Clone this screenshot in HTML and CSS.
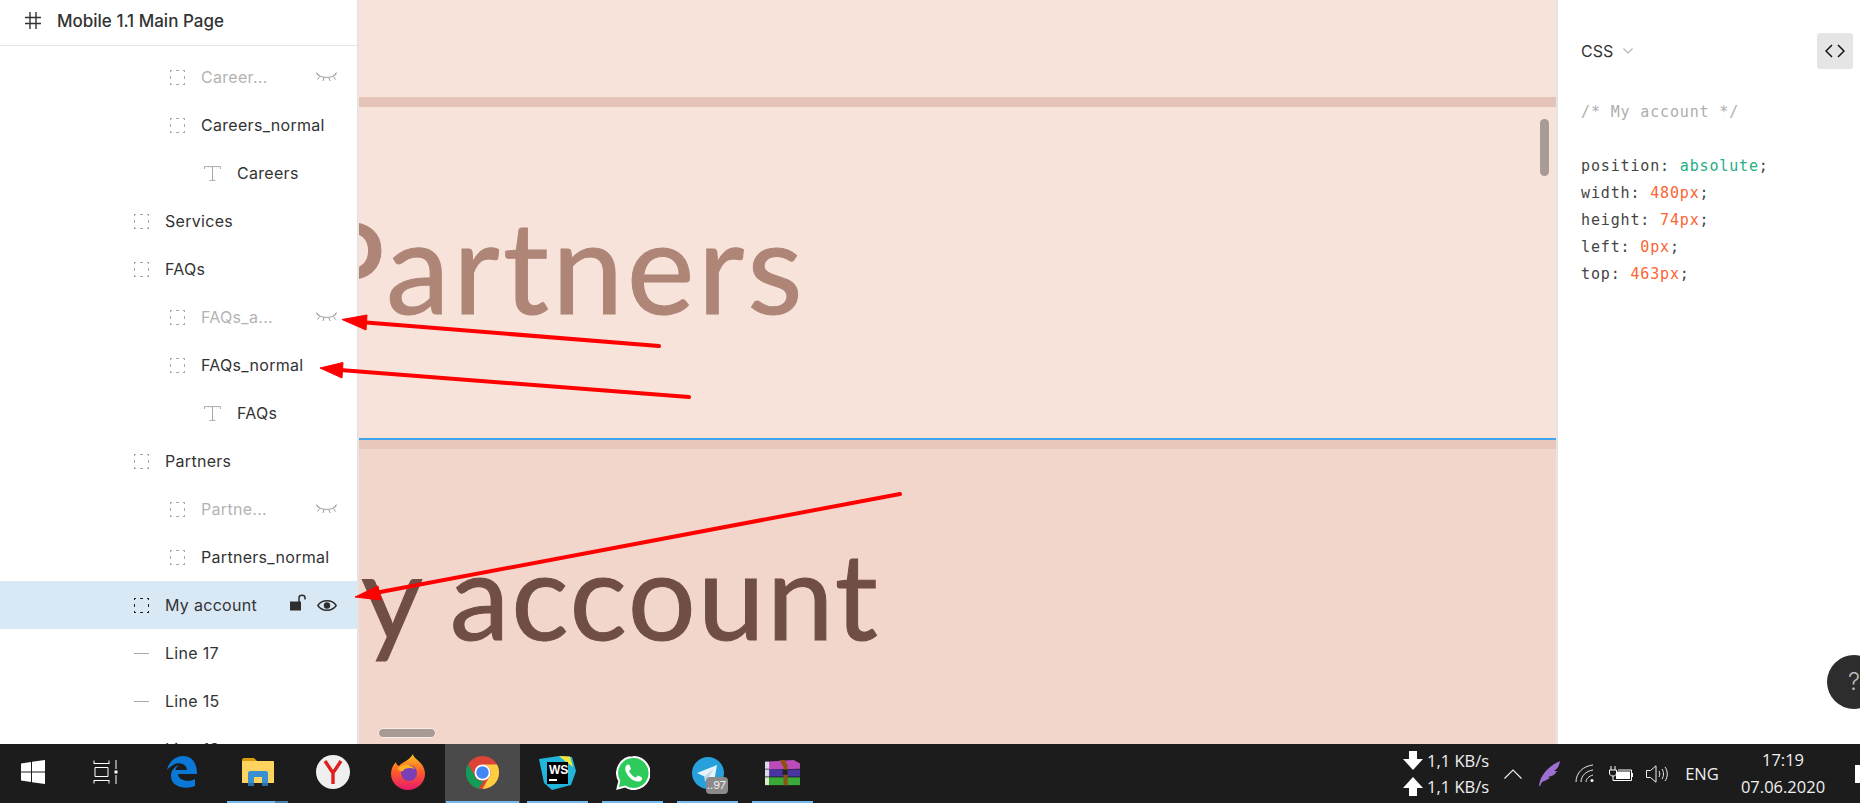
FILE: index.html
```html
<!DOCTYPE html>
<html lang="en">
<head>
    <meta charset="UTF-8">
    <meta name="viewport" content="width=device-width, initial-scale=1.0">
    <title>Mobile 1.1 Main Page</title>
    <link rel="stylesheet" href="styles.css">
</head>
<body>
    <svg class="defs" width="0" height="0">
        <symbol id="i-frame" viewBox="0 0 15 15">
            <path d="M0 0.500H2M6 0.500H9M13 0.500H15M0 14.500H2M6 14.500H9M13 14.500H15M0.500 0V2M0.500 6V9M0.500 13V15M14.500 0V2M14.500 6V9M14.500 13V15" fill="none" stroke="currentColor"/>
        </symbol>
        <symbol id="i-text" viewBox="0 0 17 15">
            <path d="M0.500 3V0.600H16.500V3M8.500 0.600V14.400M5.500 14.400H11.500" fill="none" stroke="currentColor"/>
        </symbol>
        <symbol id="i-line" viewBox="0 0 15 15">
            <path d="M0 7.500H15" stroke="currentColor"/>
        </symbol>
        <symbol id="i-hidden" viewBox="0 0 21 10">
            <path d="M0.500 2C6 6.600 15 6.600 20.500 2M0.500 0.500L3 3.500M20.500 0.500L18 3.500M3.500 4.500L1.500 7.500M8 6L7 9M13 6L14 9M17.500 4.500L19.500 7.500" fill="none" stroke="currentColor"/>
        </symbol>
    </svg>

    <div class="screen">
        <div class="workspace">
            <aside class="layers">
                <div class="layers-head">
                    <svg class="hash" width="16" height="17" viewBox="0 0 16 17"><path d="M5 0V17M11 0V17M0 5.500H16M0 11.500H16" fill="none" stroke="#333" stroke-width="1.400"/></svg>
                    <span>Mobile 1.1 Main Page</span>
                </div>
                <ul class="layer-list">
                    <li class="layer depth-2 muted"><svg class="ico"><use href="#i-frame"/></svg><span class="name">Career...</span><svg class="eye-off"><use href="#i-hidden"/></svg></li>
                    <li class="layer depth-2"><svg class="ico"><use href="#i-frame"/></svg><span class="name">Careers_normal</span></li>
                    <li class="layer depth-3"><svg class="ico ico-t"><use href="#i-text"/></svg><span class="name">Careers</span></li>
                    <li class="layer depth-1"><svg class="ico"><use href="#i-frame"/></svg><span class="name">Services</span></li>
                    <li class="layer depth-1"><svg class="ico"><use href="#i-frame"/></svg><span class="name">FAQs</span></li>
                    <li class="layer depth-2 muted"><svg class="ico"><use href="#i-frame"/></svg><span class="name">FAQs_a...</span><svg class="eye-off"><use href="#i-hidden"/></svg></li>
                    <li class="layer depth-2"><svg class="ico"><use href="#i-frame"/></svg><span class="name">FAQs_normal</span></li>
                    <li class="layer depth-3"><svg class="ico ico-t"><use href="#i-text"/></svg><span class="name">FAQs</span></li>
                    <li class="layer depth-1"><svg class="ico"><use href="#i-frame"/></svg><span class="name">Partners</span></li>
                    <li class="layer depth-2 muted"><svg class="ico"><use href="#i-frame"/></svg><span class="name">Partne...</span><svg class="eye-off"><use href="#i-hidden"/></svg></li>
                    <li class="layer depth-2"><svg class="ico"><use href="#i-frame"/></svg><span class="name">Partners_normal</span></li>
                    <li class="layer depth-1 selected">
                        <svg class="ico ico-dark"><use href="#i-frame"/></svg>
                        <span class="name">My account</span>
                        <svg class="lock" width="16" height="17" viewBox="0 0 16 17"><path d="M0 7.500H11V16.500H0Z" fill="#2e2e2e"/><path d="M9 8V3.800C9 0.400 15 0.400 15 3.800V5.500" fill="none" stroke="#2e2e2e" stroke-width="1.500"/></svg>
                        <svg class="eye" width="20" height="13" viewBox="0 0 20 13"><path d="M0.800 6.500C5 0.200 15 0.200 19.200 6.500C15 12.800 5 12.800 0.800 6.500Z" fill="none" stroke="#2e2e2e" stroke-width="1.400"/><circle cx="10" cy="6.500" r="3.200" fill="#2e2e2e"/></svg>
                    </li>
                    <li class="layer depth-1"><svg class="ico"><use href="#i-line"/></svg><span class="name">Line 17</span></li>
                    <li class="layer depth-1"><svg class="ico"><use href="#i-line"/></svg><span class="name">Line 15</span></li>
                    <li class="layer depth-1"><svg class="ico"><use href="#i-line"/></svg><span class="name">Line 13</span></li>
                </ul>
            </aside>

            <main class="canvas">
                <div class="art art-light">
                    <div class="art-rule"></div>
                    <div class="art-label label-partners">Partners</div>
                </div>
                <div class="art art-dark">
                    <div class="art-rule"></div>
                    <div class="art-label label-account">My account</div>
                </div>
                <div class="scroll-v"></div>
                <div class="scroll-h"></div>
            </main>

            <aside class="inspect">
                <div class="inspect-head">
                    <span class="lang">CSS</span>
                    <svg class="lang-arrow" width="10" height="6" viewBox="0 0 10 6"><path d="M0.500 0.500L5 5L9.500 0.500" fill="none" stroke="#b5b5b5" stroke-width="1.200"/></svg>
                    <button class="code-btn"><svg width="20" height="14" viewBox="0 0 20 14"><path d="M7 1L1 7L7 13M13 1L19 7L13 13" fill="none" stroke="#111" stroke-width="1.500"/></svg></button>
                </div>
                <pre class="code"><span class="c-comment">/* My account */</span>

position: <span class="c-word">absolute</span>;
width: <span class="c-num">480px</span>;
height: <span class="c-num">74px</span>;
left: <span class="c-num">0px</span>;
top: <span class="c-num">463px</span>;</pre>
                <div class="help">?</div>
            </aside>
        </div>

        <footer class="taskbar">
            <div class="task-btn task-start">
                <svg width="24" height="24" viewBox="0 0 24 24"><path d="M0 3.400L10 2V11.400H0ZM11 1.800L24 0V11.400H11ZM0 12.600H10V22L0 20.600ZM11 12.600H24V24L11 22.200Z" fill="#fff"/></svg>
            </div>
            <div class="task-btn task-view">
                <svg width="25" height="24" viewBox="0 0 25 24"><path d="M1 4V0.500M16 4V0.500M1 3.500H16M2 7.500H15V16.500H2ZM1 23.500V20M16 23.500V20M1 20.500H16M23 0V9M23 15V24" fill="none" stroke="#fff"/><rect x="21.500" y="10.500" width="3" height="3" fill="#fff"/></svg>
            </div>
            <div class="task-btn task-edge">
                <svg width="30" height="32" viewBox="0 0 30 32"><path d="M0 14C2 5 9 0 16 0C25 0 30 7 30 18H11C11 24 21 27 28 23V30C18 34 4 31 4 20C4 15 7 11 12 9C9 11 8.500 13 8.500 14H20C20 8 11 5 6 9C3.500 10.500 1.500 12 0 14Z" fill="#0b78d7"/></svg>
            </div>
            <div class="task-btn open split">
                <svg width="32" height="30" viewBox="0 0 32 30"><path d="M0 2C0 1 1 0 2 0H12L15 3H0Z" fill="#d89e0c"/><path d="M0 3H31C31.500 3 32 3.500 32 4V25H0Z" fill="#ffd45e"/><path d="M6 25V15C6 14 7 13 8 13H24C25 13 26 14 26 15V25H20V19H12V25Z" fill="#3a8fd3"/><path d="M6 25H12V28H6ZM20 25H26V28H20Z" fill="#2b70a8"/></svg>
            </div>
            <div class="task-btn">
                <svg width="34" height="34" viewBox="0 0 34 34"><circle cx="17" cy="17" r="17" fill="#efefef"/><path d="M9 6L17 18L25 6M17 18V29" fill="none" stroke="#e01e1e" stroke-width="3.400"/></svg>
            </div>
            <div class="task-btn">
                <svg width="34" height="36" viewBox="0 0 34 36"><defs><linearGradient id="ff" x1="0" y1="0" x2="0" y2="1"><stop offset="0" stop-color="#ffc51e"/><stop offset="0.500" stop-color="#ff5b2b"/><stop offset="1" stop-color="#e6186c"/></linearGradient></defs><path d="M22 0C22 5 34 8 34 20C34 29 26 36 17 36C8 36 0 29 0 20C0 15 2 11 5 8C5 10 6 11 8 12C11 8 18 7 22 0Z" fill="url(#ff)"/><circle cx="18" cy="19" r="8" fill="#7b3fb5"/><path d="M7 14C11 10 19 9 24 15C19 13 13 14 12 17C9 18 7 16 7 14Z" fill="#ffb020"/></svg>
            </div>
            <div class="task-btn open active">
                <svg width="33" height="33" viewBox="0 0 33 33"><circle cx="16.500" cy="16.500" r="16.500" fill="#db4437"/><path d="M16.500 33A16.500 16.500 0 0 1 2.200 8.250L9 20.500A8 8 0 0 0 18 24.500L12 33Z" fill="#0f9d58"/><path d="M16.500 8.500H31A16.500 16.500 0 0 1 16.500 33L23.500 20.500A8 8 0 0 0 16.500 8.500Z" fill="#ffcd40"/><circle cx="16.500" cy="16.500" r="8" fill="#fff"/><circle cx="16.500" cy="16.500" r="6.200" fill="#4285f4"/></svg>
            </div>
            <div class="task-btn open">
                <svg width="37" height="34" viewBox="0 0 37 34"><path d="M0 3L20 0L33 1L37 15L32 29L13 34L5 27Z" fill="#22b5dc"/><path d="M20 0L31 0.500L34 11L26 5Z" fill="#f4e83a"/><rect x="8" y="6" width="21" height="22" fill="#000"/><text class="ws-text" x="10" y="18">WS</text><rect x="10" y="23" width="8" height="2" fill="#fff"/></svg>
            </div>
            <div class="task-btn open">
                <svg width="34" height="34" viewBox="0 0 34 34"><path d="M17 1A16 16 0 0 0 3.300 25L1.500 32.500L9 30.500A16 16 0 1 0 17 1Z" fill="#2ccb5b" stroke="#fff" stroke-width="2"/><path d="M11.500 8.500C9 10 8.500 13 10.500 17C13 22 18 26 23 25.500C25.500 25 26.500 23 26 21.500L22 19.500L20 21.500C17.500 21 14 17.500 13 15L15 13L13.500 9C13 8.500 12 8.300 11.500 8.500Z" fill="#fff"/></svg>
            </div>
            <div class="task-btn open">
                <div class="tg-wrap">
                    <svg width="32" height="34" viewBox="0 0 32 34"><circle cx="16" cy="17" r="16" fill="#27a0dc"/><path d="M5 17L25 9L22 26L16 22L13 25.500L12.500 20.500Z" fill="#e6f3fa"/><path d="M12.500 20.500L22 12.500L16 22L13 25.500Z" fill="#bcd8e8"/></svg>
                    <span class="tg-badge">..97</span>
                </div>
            </div>
            <div class="task-btn open">
                <svg width="35" height="26" viewBox="0 0 34 30" preserveAspectRatio="none"><path d="M0 2L28 0L34 4V10L4 11Z" fill="#bb4bb8"/><path d="M0 11L4 11H34V19H4L0 18Z" fill="#4a34a3"/><path d="M0 2H4V10H0ZM0 11H4V19H0Z" fill="#dcd8ec"/><path d="M0 20H4V29H0Z" fill="#d6efc4"/><path d="M4 20H34V29H4Z" fill="#3aa93a"/><path d="M14 0H19L22 6V29H18V8Z" fill="#8a5312"/><rect x="17" y="11" width="5" height="6" fill="#222"/></svg>
            </div>

            <div class="tray">
                <div class="net">
                    <div class="net-row">
                        <svg width="20" height="19" viewBox="0 0 20 19"><path d="M6 0H14V8H20L10 19L0 8H6Z" fill="#fff"/></svg>
                        <span>1,1 KB/s</span>
                    </div>
                    <div class="net-row">
                        <svg width="20" height="19" viewBox="0 0 20 19"><path d="M10 0L20 11H14V19H6V11H0Z" fill="#fff"/></svg>
                        <span>1,1 KB/s</span>
                    </div>
                </div>
                <div class="tray-slot">
                    <svg width="18" height="10" viewBox="0 0 18 10"><path d="M0.500 9.500L9 1L17.500 9.500" fill="none" stroke="#eee" stroke-width="1.200"/></svg>
                </div>
                <div class="tray-slot">
                    <svg width="21" height="25" viewBox="0 0 21 25"><path d="M0 25C1 15 8 6 21 0C20 6 18 8 15 10L18 10C16 14 13 15 9 16L11 17C8 19 5 20 3 21L1 25Z" fill="#9d6fd3"/></svg>
                </div>
                <div class="tray-slot">
                    <svg width="20" height="19" viewBox="0 0 20 19"><path d="M1 18C1 9 8 2 18 1M6 18C6 12 11 7 18 6M11 18C11 15 14 12 18 11" fill="none" stroke="#e8e8e8" stroke-width="1"/><circle cx="17" cy="16.500" r="1.500" fill="#fff"/></svg>
                </div>
                <div class="tray-slot">
                    <svg width="24" height="16" viewBox="0 0 24 16"><path d="M2 0V4M6 0V4M0.500 4H7.500V7C7.500 9 6 10 4 10C2 10 0.500 9 0.500 7ZM4 10V14.500H22.500V4H9" fill="none" stroke="#fff"/><rect x="7" y="5.500" width="14" height="7.500" fill="#fff"/><rect x="23" y="7" width="1" height="4" fill="#fff"/></svg>
                </div>
                <div class="tray-slot">
                    <svg width="22" height="18" viewBox="0 0 22 18"><path d="M0.500 5.500H4.500L10 0.800V17.200L4.500 12.500H0.500ZM13 6C14 8 14 10 13 12M16 4C18 7 18 11 16 14M19 2C22 6 22 12 19 16" fill="none" stroke="#eee"/></svg>
                </div>
                <div class="tray-lang">ENG</div>
                <div class="clock">
                    <span>17:19</span>
                    <span>07.06.2020</span>
                </div>
                <div class="desk-bar"></div>
            </div>
        </footer>
    </div>

    <!-- red marks drawn on top of the screenshot -->
    <svg class="marks" width="1860" height="803" viewBox="0 0 1860 803">
        <g fill="#ff0000" stroke="#ff0000">
            <path d="M659 346L360 322" stroke-width="4" stroke-linecap="round"/>
            <path d="M342 319.500L367 315L366 330Z"/>
            <path d="M689 397L340 370" stroke-width="4" stroke-linecap="round"/>
            <path d="M320 368L343 362.500L342 378Z"/>
            <path d="M900 494L375 593" stroke-width="4" stroke-linecap="round"/>
            <path d="M355 597L378 586L381 600Z"/>
        </g>
    </svg>
</body>
</html>
```

FILE: styles.css
```css
/* Page */
* {
    box-sizing: border-box;
}

body {
    margin: 0;
    width: 1860px;
    height: 803px;
    overflow: hidden;
    background-color: #fff;
    color: #333;
    font-family: 'Inter', 'Liberation Sans', sans-serif;
}

.defs {
    position: absolute;
}

.screen {
    display: flex;
    flex-direction: column;
    height: 803px;
}

.workspace {
    display: flex;
    height: 744px;
}

/* Layers panel */
.layers {
    width: 359px;
    flex-shrink: 0;
    overflow: hidden;
    border-right: 2px solid #e4e4e4;
}

.layers-head {
    display: flex;
    align-items: center;
    height: 46px;
    padding: 0 0 4px 25px;
    border-bottom: 1px solid #e5e5e5;
    font-size: 17px;
    font-weight: 500;
    white-space: nowrap;
}

.hash {
    margin-right: 16px;
}

.layer-list {
    list-style: none;
    margin: 0;
    padding: 7px 0 0;
}

.layer {
    display: flex;
    align-items: center;
    height: 48px;
    font-size: 16px;
    letter-spacing: 0.3px;
    white-space: nowrap;
}

.depth-1 {
    padding-left: 134px;
}

.depth-2 {
    padding-left: 170px;
}

.depth-3 {
    padding-left: 204px;
}

.ico {
    width: 15px;
    height: 15px;
    margin-right: 16px;
    flex-shrink: 0;
    color: #a8a8a8;
}

.ico-dark {
    color: #222;
}

.ico-t {
    width: 17px;
    margin-right: 16px;
}

.muted {
    color: #b3b3b3;
}

.eye-off {
    width: 21px;
    height: 10px;
    margin-left: auto;
    margin-right: 20px;
    color: #999;
}

.selected {
    background-color: #d9e8f5;
}

.lock {
    margin-left: auto;
    margin-right: 11px;
    margin-top: -5px;
}

.eye {
    margin-right: 20px;
}

/* Canvas */
.canvas {
    position: relative;
    flex: 1;
    overflow: hidden;
    display: flex;
    flex-direction: column;
}

.art {
    display: flex;
    flex-direction: column;
}

.art-light {
    height: 438px;
    padding-top: 97px;
    background-color: #f7e3da;
}

.art-dark {
    flex: 1;
    background-color: #f3d6cb;
    border-top: 2px solid #3ea5ee;
}

.art-rule {
    height: 10px;
    background-color: #e4c4b7;
}

.art-dark .art-rule {
    height: 9px;
    background-color: #e9c8bb;
}

.art-label {
    font-family: 'Lato', 'Liberation Sans', sans-serif;
    line-height: 150px;
    white-space: nowrap;
    -webkit-text-stroke: 1px currentColor;
}

.label-partners {
    margin: 83px 0 0 -51px;
    font-size: 128px;
    letter-spacing: 3.3px;
    color: #ae8576;
}

.label-account {
    margin: 70px 0 0 -110px;
    font-size: 120px;
    letter-spacing: 2px;
    word-spacing: -5px;
    color: #704e45;
}

.scroll-v {
    position: absolute;
    right: 7px;
    top: 119px;
    width: 9px;
    height: 57px;
    border-radius: 5px;
    background-color: #a89a94;
}

.scroll-h {
    position: absolute;
    left: 19px;
    top: 728px;
    width: 58px;
    height: 10px;
    border-radius: 5px;
    background-color: #a89a94;
    border: 1px solid #f8ece7;
}

/* Code panel */
.inspect {
    position: relative;
    width: 304px;
    flex-shrink: 0;
    overflow: hidden;
    border-left: 2px solid #e4e4e4;
}

.inspect-head {
    display: flex;
    align-items: center;
    height: 36px;
    margin: 33px 7px 0 23px;
    font-size: 16px;
}

.lang-arrow {
    margin-left: 10px;
}

.code-btn {
    display: flex;
    align-items: center;
    justify-content: center;
    width: 36px;
    height: 36px;
    margin-left: auto;
    padding: 0;
    border: none;
    border-radius: 3px;
    background-color: #e5e5e5;
}

.code {
    margin: 30px 0 0 23px;
    font-family: 'DejaVu Sans Mono', 'Liberation Mono', monospace;
    font-size: 15px;
    letter-spacing: 0.85px;
    line-height: 27px;
    color: #444;
}

.c-comment {
    color: #aeaeae;
}

.c-word {
    color: #27ae85;
}

.c-num {
    color: #fa6432;
}

.help {
    position: absolute;
    left: 269px;
    top: 655px;
    width: 54px;
    height: 54px;
    border-radius: 50%;
    padding-left: 21px;
    background-color: #2d2d2d;
    color: #bbb;
    font-size: 24px;
    font-weight: 300;
    line-height: 54px;
}

/* Windows taskbar */
.taskbar {
    display: flex;
    height: 59px;
    background-color: #1c1c1c;
    color: #f0f0f0;
}

.task-btn {
    display: flex;
    flex-direction: column;
    align-items: center;
    justify-content: center;
    width: 75px;
    padding: 0 1px 3px;
}

.task-start {
    width: 66px;
}

.task-view {
    width: 78px;
}

.task-edge {
    width: 76px;
}

.open {
    position: relative;
    padding-bottom: 0;
}

.open svg, .tg-wrap {
    margin-top: auto;
    margin-bottom: auto;
}

.open::after {
    content: "";
    display: block;
    width: 61px;
    height: 2px;
    flex-shrink: 0;
    background-color: #76b9ed;
}

.split::after {
    background: linear-gradient(to right, #76b9ed 48px, #4d7ea6 48px);
}

.active {
    background-color: #4a4a4a;
}

.active::after {
    width: 100%;
}

.ws-text {
    font-family: 'Liberation Sans', sans-serif;
    font-size: 12px;
    font-weight: 700;
    fill: #fff;
}

.tg-wrap {
    position: relative;
    display: flex;
}

.tg-badge {
    position: absolute;
    left: 14px;
    top: 21px;
    width: 22px;
    height: 17px;
    border-radius: 4px;
    background-color: #8a8a8a;
    color: #eee;
    font-size: 11px;
    line-height: 17px;
    text-align: center;
}

/* System tray */
.tray {
    display: flex;
    align-items: center;
    margin-left: auto;
    font-family: 'Open Sans', 'Noto Sans', sans-serif;
    font-size: 16.5px;
}

.net {
    display: flex;
    flex-direction: column;
    gap: 7px;
    width: 92px;
}

.net-row {
    display: flex;
    align-items: center;
    gap: 4px;
    height: 19px;
}

.tray-slot {
    display: flex;
    align-items: center;
    justify-content: center;
    width: 36px;
}

.tray-lang {
    width: 54px;
    text-align: center;
}

.clock {
    display: flex;
    flex-direction: column;
    align-items: center;
    gap: 5px;
    width: 108px;
    line-height: 22px;
}

.desk-bar {
    width: 5px;
    height: 18px;
    margin-left: 18px;
    background-color: #fff;
}

/* Annotation overlay */
.marks {
    position: absolute;
    left: 0;
    top: 0;
    pointer-events: none;
}
```
